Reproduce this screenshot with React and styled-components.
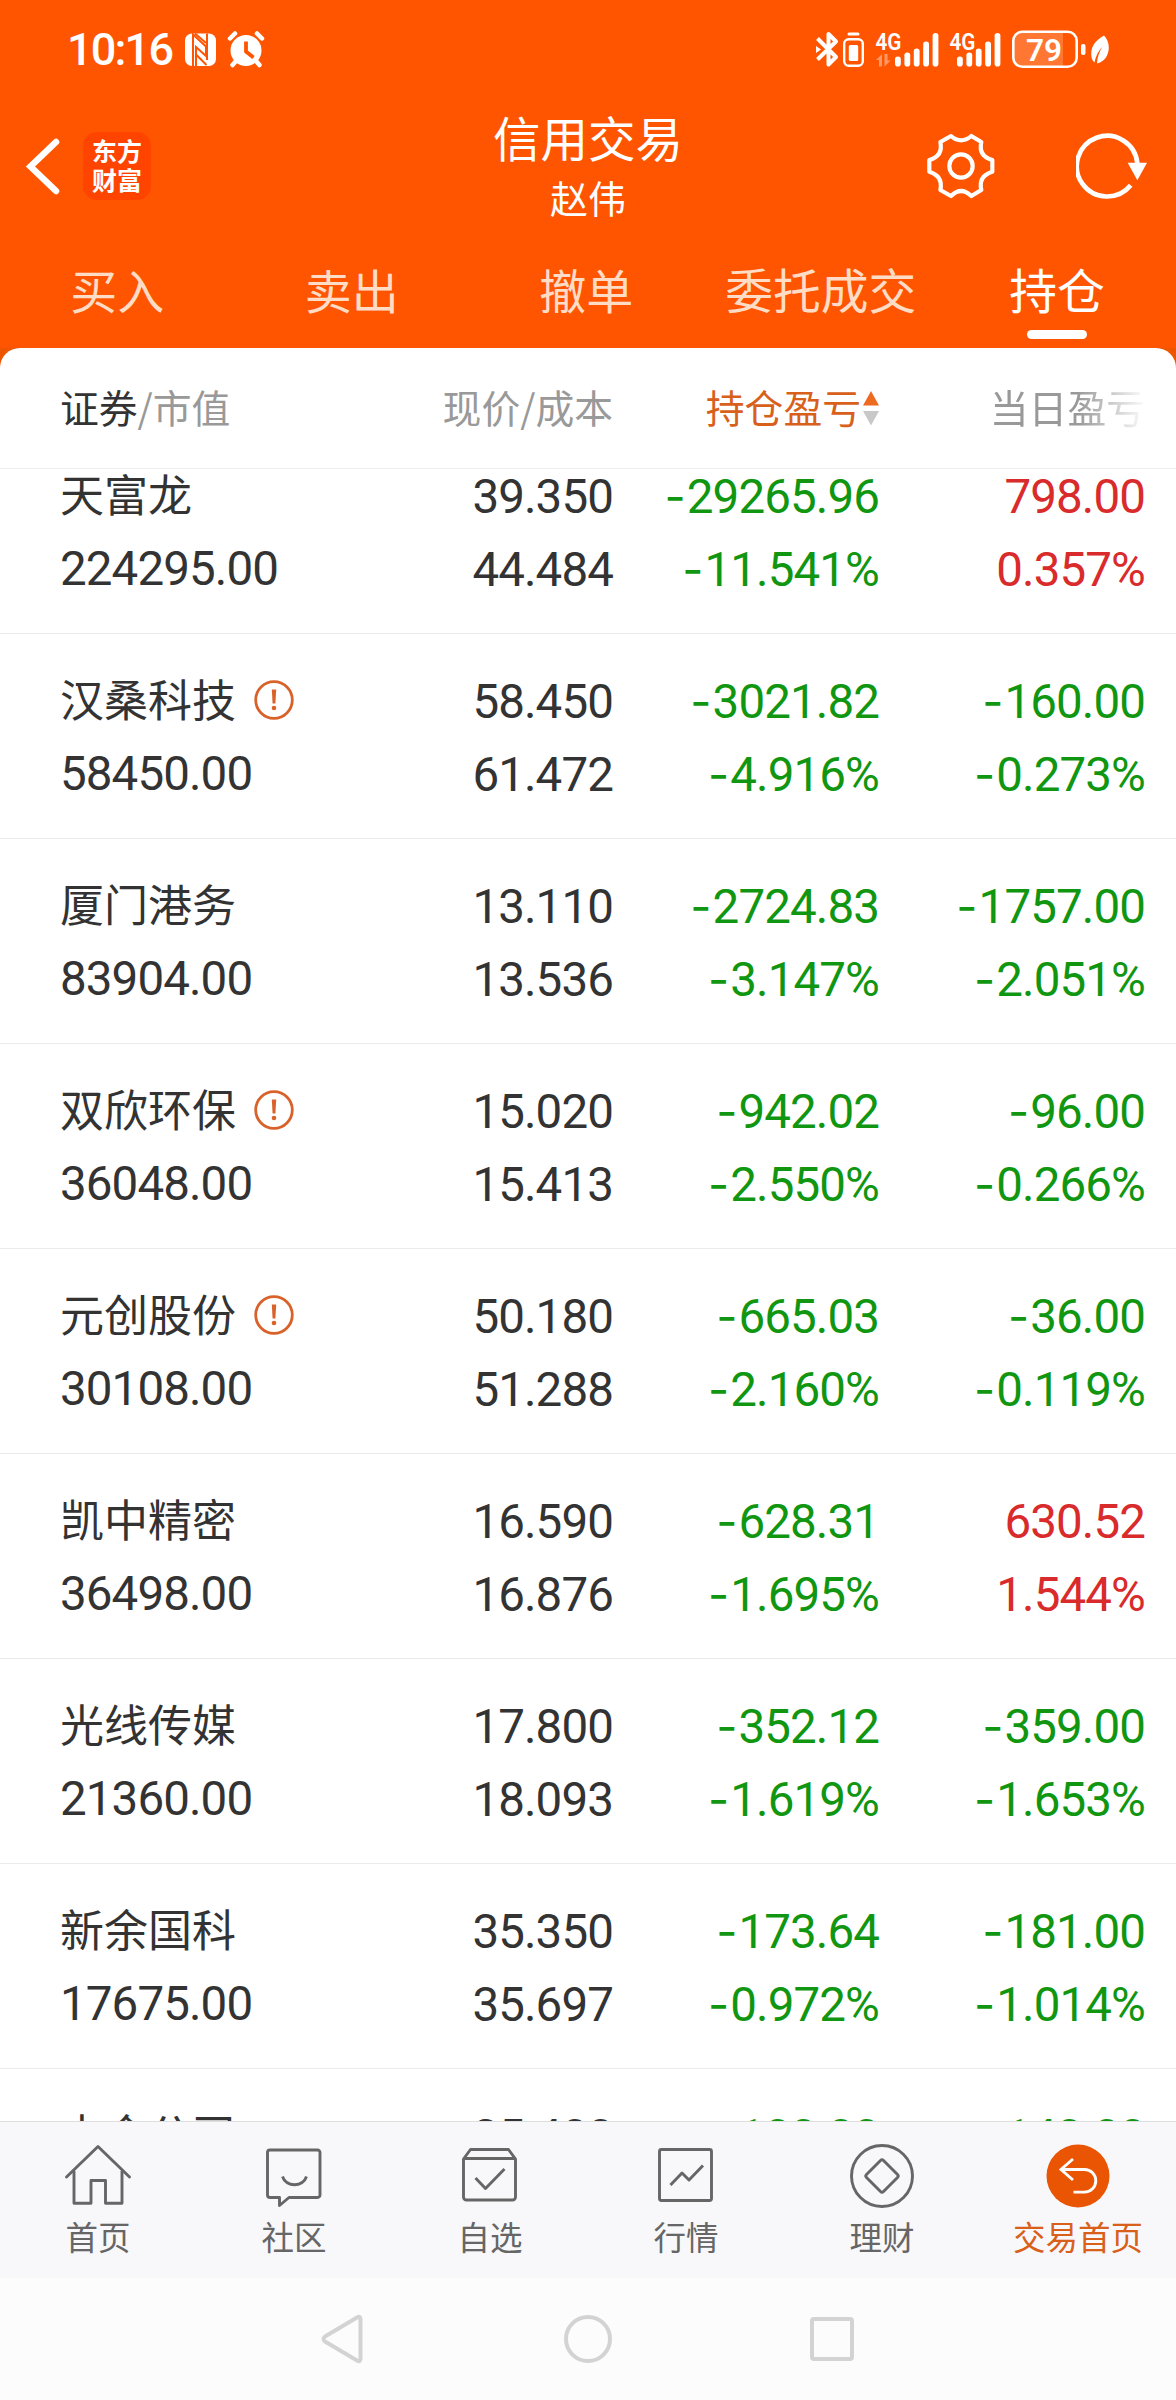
import styled, { createGlobalStyle, css } from "styled-components";

const GlobalStyle = createGlobalStyle`
  * {
    box-sizing: border-box;
  }
  body {
    margin: 0;
    background: #fcfcfc;
    font-family: "Noto Sans CJK SC", "Noto Sans", sans-serif;
  }
`;

const Screen = styled.div`
  display: flex;
  flex-direction: column;
  width: 1176px;
  height: 2400px;
  overflow: hidden;
  background: #fcfcfc;
`;

const Header = styled.header`
  display: flex;
  flex-direction: column;
  flex: none;
  height: 348px;
  background: #ff5500;
  color: #fff;
`;

const StatusBar = styled.div`
  display: flex;
  align-items: center;
  height: 100px;
  padding: 0 67px 0 67px;
`;

const Clock = styled.span`
  width: 118px;
  font: 500 45px/54px Roboto, sans-serif;
  letter-spacing: -1.8px;
`;

const StatusIcon = styled.svg`
  display: block;
  flex: none;
  width: ${({ $w }) => $w}px;
  height: 40px;
  margin-left: ${({ $gap = 0 }) => $gap}px;
  overflow: visible;
`;

const StatusRight = styled.div`
  display: flex;
  align-items: center;
  margin-left: auto;
`;

const TitleBar = styled.div`
  display: grid;
  grid-template-columns: 1fr 300px 1fr;
  height: 132px;
`;

const TitleLeft = styled.div`
  display: flex;
  align-items: center;
  gap: 23px;
  padding-left: 24px;
`;

const TitleRight = styled.div`
  display: flex;
  align-items: center;
  justify-content: flex-end;
  gap: 80px;
  padding-right: 29px;
`;

const TitleCenter = styled.div`
  display: flex;
  flex-direction: column;
  align-items: center;
  padding-top: 5px;
`;

const Title = styled.h1`
  margin: 0;
  font-size: 47.5px;
  font-weight: 400;
  line-height: 64px;
`;

const UserName = styled.div`
  font-size: 38px;
  line-height: 56px;
`;

const BrandLogo = styled.div`
  display: flex;
  flex-direction: column;
  align-items: center;
  justify-content: center;
  width: 68px;
  height: 68px;
  padding-bottom: 3px;
  border-radius: 14px;
  background: #ff4400;
  font-size: 25px;
  font-weight: 700;
  line-height: 29px;
`;

const Tabs = styled.nav`
  display: flex;
  height: 116px;
`;

const Tab = styled.div`
  display: flex;
  flex-direction: column;
  align-items: center;
  width: 234.5px;
  padding-top: 24px;
  font-size: ${({ $size = 47 }) => $size}px;
  line-height: 66px;
  color: ${({ $active }) => ($active ? "#fff" : "#ffdcc6")};
  &:last-child {
    flex: 1;
  }
  &::after {
    content: "";
    width: 60px;
    height: 9px;
    margin-top: 8px;
    border-radius: 4.5px;
    background: ${({ $active }) => ($active ? "#fff" : "transparent")};
  }
`;

const Sheet = styled.main`
  display: flex;
  flex-direction: column;
  flex: none;
  height: 1773px;
  background: #ee5500;
  overflow: hidden;
`;

const columns = css`
  display: grid;
  grid-template-columns: 300px 255px 266px 266px;
  padding-left: 60px;
`;

const TableHead = styled.div`
  ${columns}
  flex: none;
  align-items: center;
  height: 121px;
  padding-bottom: 4px;
  border-bottom: 1px solid #eee;
  border-radius: 20px 20px 0 0;
  background: #fff;
  font-size: 38.8px;
  line-height: 56px;
  color: #999;
`;

const HeadCell = styled.div`
  display: flex;
  align-items: center;
  justify-content: ${({ $left }) => ($left ? "flex-start" : "flex-end")};
  gap: 2px;
  padding-right: 2px;
  color: ${({ $sorted }) => ($sorted ? "#d9601a" : "#999")};
  svg {
    margin-top: 3px;
  }
  ${({ $fade }) =>
    $fade &&
    css`
      mask-image: linear-gradient(to right, #000 74%, transparent 100%);
    `}
`;

const Strong = styled.span`
  margin-right: -2px;
  color: #333;
`;

const List = styled.div`
  flex: 1;
  min-height: 0;
  overflow: hidden;
  background: #fff;
`;

const Rows = styled.div`
  margin-top: -40px;
`;

const Row = styled.div`
  ${columns}
  height: 205px;
  padding-top: 29px;
  border-bottom: 1px solid #ebebeb;
  color: #333;
`;

const Name = styled.div`
  display: flex;
  align-items: center;
  gap: 18px;
  height: 74px;
  font-size: 44px;
  line-height: 70px;
  span {
    height: 74px;
  }
`;

const Num = styled.div`
  height: 73px;
  font-family: Roboto, sans-serif;
  font-size: 47.5px;
  line-height: 78px;
  letter-spacing: -0.9px;
  white-space: nowrap;
`;

const Minus = styled.span`
  margin-right: 2px;
  font-family: Inter, sans-serif;
  font-size: 46px;
  line-height: 0;
`;

const Cell = styled.div`
  display: flex;
  flex-direction: column;
  align-items: ${({ $left }) => ($left ? "flex-start" : "flex-end")};
  padding-right: 2px;
  color: ${({ $tone }) =>
    $tone === "up" ? "#d92b2b" : $tone === "down" ? "#109610" : "#333"};
  ${({ $left }) =>
    $left &&
    css`
      ${Num} {
        line-height: 75px;
      }
    `}
`;

const TabBar = styled.nav`
  display: flex;
  flex: none;
  height: 157px;
  border-top: 1px solid #dedede;
  background: #f8f8fa;
`;

const TabItem = styled.div`
  display: flex;
  flex-direction: column;
  align-items: center;
  width: 196px;
  padding-top: 18px;
  font-size: 32.5px;
  line-height: 48px;
  color: ${({ $active }) => ($active ? "#d9601a" : "#666")};
  svg {
    display: block;
    flex: none;
  }
`;

const SystemNav = styled.div`
  display: flex;
  align-items: center;
  justify-content: center;
  gap: 190px;
  flex: 1;
  background: #fcfcfc;
`;

const holdings = [
  { name: "天富龙", value: "224295.00", price: "39.350", cost: "44.484", pnl: "-29265.96", rate: "-11.541%", day: "798.00", dayRate: "0.357%" },
  { name: "汉桑科技", warn: true, value: "58450.00", price: "58.450", cost: "61.472", pnl: "-3021.82", rate: "-4.916%", day: "-160.00", dayRate: "-0.273%" },
  { name: "厦门港务", value: "83904.00", price: "13.110", cost: "13.536", pnl: "-2724.83", rate: "-3.147%", day: "-1757.00", dayRate: "-2.051%" },
  { name: "双欣环保", warn: true, value: "36048.00", price: "15.020", cost: "15.413", pnl: "-942.02", rate: "-2.550%", day: "-96.00", dayRate: "-0.266%" },
  { name: "元创股份", warn: true, value: "30108.00", price: "50.180", cost: "51.288", pnl: "-665.03", rate: "-2.160%", day: "-36.00", dayRate: "-0.119%" },
  { name: "凯中精密", value: "36498.00", price: "16.590", cost: "16.876", pnl: "-628.31", rate: "-1.695%", day: "630.52", dayRate: "1.544%" },
  { name: "光线传媒", value: "21360.00", price: "17.800", cost: "18.093", pnl: "-352.12", rate: "-1.619%", day: "-359.00", dayRate: "-1.653%" },
  { name: "新余国科", value: "17675.00", price: "35.350", cost: "35.697", pnl: "-173.64", rate: "-0.972%", day: "-181.00", dayRate: "-1.014%" },
  { name: "中金公司", price: "35.400", pnl: "-100.00", day: "-140.00" },
];

function Amount({ children }) {
  if (!children) return null;
  const negative = children.startsWith("-");
  return (
    <Num>
      {negative && <Minus>-</Minus>}
      {negative ? children.slice(1) : children}
    </Num>
  );
}

function WarnIcon() {
  return (
    <svg width="40" height="40" viewBox="0 0 40 40" fill="none">
      <circle cx="20" cy="20" r="18.3" stroke="#d9622b" strokeWidth="2.8" />
      <path d="M17.8 9.5h4.4l-.8 14h-2.8z" fill="#d9622b" />
      <circle cx="20" cy="28" r="2.3" fill="#d9622b" />
    </svg>
  );
}

function Signal({ gap, data }) {
  const off = data ? 0 : -12;
  return (
    <StatusIcon $w={data ? 62 : 50} $gap={gap} viewBox={`0 0 ${data ? 62 : 50} 40`} fill="#fff">
      <text x="-0.5" y="19.5" fontSize="23" fontWeight="600" fontFamily="Roboto" textLength="26" lengthAdjust="spacingAndGlyphs">
        4G
      </text>
      {data && (
        <path d="M0 30l6-6v12.500H3V30zM14.500 30.500l-6 6V24h3v6.500z" opacity=".4" />
      )}
      {[10, 14, 18, 25, 33.5].map((h, i) => (
        <rect key={i} x={19 + off + i * 9.4} y={36.5 - h} width="5.8" height={h} rx="2.8" />
      ))}
    </StatusIcon>
  );
}

function StatusIcons() {
  return (
    <StatusBar>
      <Clock>10:16</Clock>
      <StatusIcon $w={31} viewBox="0 0 31 40">
        <rect y="3.5" width="31" height="32.5" rx="7" fill="#fff" />
        <path d="M8 36V4.500L21 16.500V26L11 17v19M11.500 25l10 10M10 3.500L21 13M22 3.500V30" fill="none" stroke="#ff5500" strokeWidth="2" />
      </StatusIcon>
      <StatusIcon $w={36} $gap={12} viewBox="0 0 36 40">
        <circle cx="18" cy="20.500" r="15.500" fill="#fff" />
        <path d="M2 8.500l5-5M34 8.500l-5-5M8 31l-3.500 4M28 31l3.500 4" stroke="#fff" strokeWidth="4.500" strokeLinecap="round" />
        <path d="M18 11.500v10l7.500 6" fill="none" stroke="#ff5500" strokeWidth="3.800" />
      </StatusIcon>
      <StatusRight>
        <StatusIcon $w={24} viewBox="0 0 24 40" fill="none" stroke="#fff" strokeWidth="4" strokeLinejoin="round">
          <path d="M1.500 8.500L20 27l-7.500 7.500V4L20 11.500 1.500 29.500" />
          <path d="M0 16l5 3.500-5 3.500z" fill="#fff" stroke="none" />
        </StatusIcon>
        <StatusIcon $w={21} $gap={3} viewBox="0 0 21 40" fill="#fff">
          <rect x="4.500" y="2.500" width="12" height="3" rx="1.500" />
          <rect x="1.200" y="9.200" width="18.600" height="26.600" rx="4.500" fill="none" stroke="#fff" strokeWidth="2.400" />
          <rect x="5.800" y="15" width="9.400" height="16" rx="1.500" />
        </StatusIcon>
        <Signal data gap={12} />
        <Signal gap={12} />
        <StatusIcon $w={73} $gap={12} viewBox="0 0 73 40">
          <path d="M9 2h42v35H9a8 8 0 0 1-8-8V10a8 8 0 0 1 8-8z" fill="#fff" opacity=".2" />
          <rect x="1.300" y="1.800" width="63.400" height="34.900" rx="9" fill="none" stroke="#fff" strokeWidth="2.600" />
          <rect x="69" y="14" width="4.500" height="11" rx="2" fill="#fff" />
          <text x="32" y="30.500" textAnchor="middle" fontSize="31.500" fontWeight="600" fontFamily="Roboto" fill="#fff">
            79
          </text>
        </StatusIcon>
        <StatusIcon $w={18} $gap={6} viewBox="0 0 18 40">
          <path d="M13 5.500C4 10.500-1 17.500.5 27c.5 2.500 1.500 4.500 3 5.500 1-6.500 4-11.500 8-16-3 5-5.200 10.500-5.500 17C13 32 17.500 26 17.800 18c.1-5-1.800-9.500-4.800-12.500z" fill="#fff" />
        </StatusIcon>
      </StatusRight>
    </StatusBar>
  );
}

const tabIcons = {
  home: (
    <>
      <path d="M4.500 37L36 6.500 67.500 37" strokeLinecap="round" />
      <path d="M12 31V63.200H29V40.500H43.500V63.200H60V31" />
    </>
  ),
  community: (
    <>
      <path d="M12 10H59.500a2.500 2.500 0 0 1 2.500 2.500V55a2.500 2.500 0 0 1-2.500 2.500H31L21.500 65.500V57.500H12A2.500 2.500 0 0 1 9.500 55V12.500A2.500 2.500 0 0 1 12 10z" />
      <path d="M24.500 36.500C28 47.500 45 47.500 48.500 36.500" />
    </>
  ),
  watchlist: (
    <>
      <path d="M9.500 19L16.500 9.500H54.500L61.500 19V57a3 3 0 0 1-3 3H12.500a3 3 0 0 1-3-3zM9.500 18.500H61.500" />
      <path d="M21.500 38L31.500 48.500 50.500 29" />
    </>
  ),
  quotes: (
    <>
      <rect x="9.500" y="9.500" width="52" height="51" rx="2" />
      <path d="M20.500 45L32 33 39 40 53 25.500" />
    </>
  ),
  wealth: (
    <>
      <circle cx="36" cy="36" r="30.500" />
      <path d="M34.500 20.500q1.500-1.500 3 0L51.500 34.500q1.500 1.500 0 3L37.500 51.500q-1.500 1.500-3 0L20.500 37.500q-1.500-1.500 0-3z" />
    </>
  ),
  trade: (
    <>
      <circle cx="36" cy="36" r="31.500" fill="#ea5504" stroke="none" />
      <path d="M31 19L19 29.500 31 40M19 29.500H42.500a11.300 11.300 0 0 1 0 22.600H31.500" stroke="#fff" strokeLinejoin="miter" />
    </>
  ),
};

const tabItems = [
  ["home", "首页"],
  ["community", "社区"],
  ["watchlist", "自选"],
  ["quotes", "行情"],
  ["wealth", "理财"],
  ["trade", "交易首页"],
];

function App() {
  return (
    <>
      <GlobalStyle />
      <Screen>
        <Header>
          <StatusIcons />
          <TitleBar>
            <TitleLeft>
              <svg width="36" height="60" viewBox="0 0 36 60" fill="none">
                <path d="M32 6L6.500 30.500 32 55" stroke="#fff" strokeWidth="6.500" strokeLinecap="round" />
              </svg>
              <BrandLogo>
                <span>东方</span>
                <span>财富</span>
              </BrandLogo>
            </TitleLeft>
            <TitleCenter>
              <Title>信用交易</Title>
              <UserName>赵伟</UserName>
            </TitleCenter>
            <TitleRight>
              <svg width="70" height="68" viewBox="440 396 210 204" fill="none" stroke="#fff" strokeWidth="12.500" strokeLinejoin="round">
                <path d="M515 408Q545 434 576 408L606 426Q596 468 639 480V515Q596 528 606 570L576 588Q545 558 515 588L483 570Q492 528 450 515V480Q492 468 483 426Z" />
                <circle cx="545" cy="498" r="35" />
              </svg>
              <svg width="71" height="68" viewBox="885 396 213 204">
                <path d="M1049 556A91 91 0 1 1 1069 490" fill="none" stroke="#fff" strokeWidth="14" />
                <path d="M1040 488h58l-29 53z" fill="#fff" />
              </svg>
            </TitleRight>
          </TitleBar>
          <Tabs>
            <Tab>买入</Tab>
            <Tab>卖出</Tab>
            <Tab>撤单</Tab>
            <Tab $size={47.8}>委托成交</Tab>
            <Tab $active $size={47.8}>持仓</Tab>
          </Tabs>
        </Header>
        <Sheet>
          <TableHead>
            <HeadCell $left>
              <Strong>证券</Strong>/市值
            </HeadCell>
            <HeadCell>现价/成本</HeadCell>
            <HeadCell $sorted>
              持仓盈亏
              <svg width="16" height="36" viewBox="0 0 16 36">
                <path d="M8 1l8 14.500H0z" fill="#ee6a1f" />
                <path d="M8 35.500L0 21h16z" fill="#c8c8c8" />
              </svg>
            </HeadCell>
            <HeadCell $fade>当日盈亏</HeadCell>
          </TableHead>
          <List>
            <Rows>
              {holdings.map((item) => (
                <Row key={item.name}>
                  <Cell $left>
                    <Name>
                      <span>{item.name}</span>
                      {item.warn && <WarnIcon />}
                    </Name>
                    <Amount>{item.value}</Amount>
                  </Cell>
                  <Cell>
                    <Amount>{item.price}</Amount>
                    <Amount>{item.cost}</Amount>
                  </Cell>
                  <Cell $tone="down">
                    <Amount>{item.pnl}</Amount>
                    <Amount>{item.rate}</Amount>
                  </Cell>
                  <Cell $tone={item.day.startsWith("-") ? "down" : "up"}>
                    <Amount>{item.day}</Amount>
                    <Amount>{item.dayRate}</Amount>
                  </Cell>
                </Row>
              ))}
            </Rows>
          </List>
        </Sheet>
        <TabBar>
          {tabItems.map(([icon, label]) => (
            <TabItem key={icon} $active={icon === "trade"}>
              <svg width="72" height="72" viewBox="0 0 72 72" fill="none" stroke={icon === "trade" ? "#fff" : "#666"} strokeWidth="2.9" strokeLinejoin="round">
                {tabIcons[icon]}
              </svg>
              {label}
            </TabItem>
          ))}
        </TabBar>
        <SystemNav>
          <svg width="54" height="54" viewBox="0 0 54 54" fill="none" stroke="#d3d3d3" strokeWidth="4" strokeLinejoin="round">
            <path d="M40 5.500Q43.500 3.500 43.500 7.500V46.500Q43.500 50.500 40 48.500L8 29.500Q5 27 8 24.500Z" />
          </svg>
          <svg width="54" height="54" viewBox="0 0 54 54" fill="none" stroke="#d3d3d3" strokeWidth="4">
            <circle cx="27" cy="27" r="22" />
          </svg>
          <svg width="54" height="54" viewBox="0 0 54 54" fill="none" stroke="#d3d3d3" strokeWidth="4">
            <rect x="7" y="7" width="40" height="40" rx="2" />
          </svg>
        </SystemNav>
      </Screen>
    </>
  );
}

export default App;
